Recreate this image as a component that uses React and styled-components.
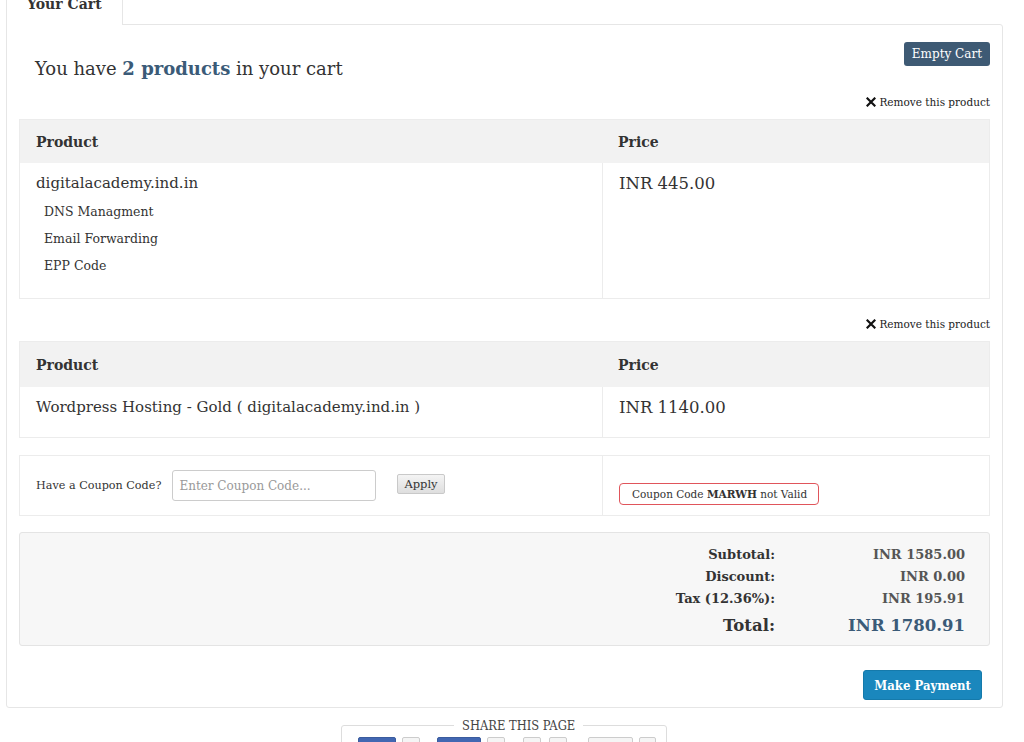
import React from 'react';
import styled, { createGlobalStyle } from 'styled-components';

const GlobalStyle = createGlobalStyle`
  html, body {
    margin: 0;
    padding: 0;
    background: #fff;
    font-family: "DejaVu Serif", "Liberation Serif", serif;
    color: #333;
    overflow: hidden;
  }
  * { box-sizing: border-box; }
`;

const Page = styled.div`
  width: 1024px;
  height: 742px;
  overflow: hidden;
  padding: 0 21px 0 6px;
`;

const Tabs = styled.div`
  display: flex;
  margin-top: -16px;
`;

const Tab = styled.div`
  width: 117px;
  height: 41px;
  border: 1px solid #e6e6e6;
  border-bottom: none;
  background: #fff;
  font-weight: bold;
  font-size: 14px;
  padding: 11px 0 0 20px;
  position: relative;
  z-index: 1;
  margin-bottom: -1px;
`;

const Panel = styled.div`
  border: 1px solid #e6e6e6;
  border-radius: 0 3px 3px 3px;
  padding: 17px 12px 7px 12px;
`;

const CartHead = styled.div`
  display: flex;
  justify-content: space-between;
  align-items: flex-start;
  padding: 0 0 0 16px;
`;

const Title = styled.h2`
  margin: 16px 0 0 0;
  font-size: 18px;
  font-weight: normal;
  color: #333;
  b { color: #3b5b78; }
`;

const DarkButton = styled.button`
  font-family: inherit;
  font-size: 12px;
  color: #fff;
  background: #3e5a74;
  border: none;
  border-radius: 3px;
  height: 24px;
  padding: 0 8px;
`;

const RemoveRow = styled.div`
  display: flex;
  justify-content: flex-end;
  align-items: center;
  gap: 3px;
  font-size: 10.5px;
  color: #222;
  margin-top: ${p => p.$top}px;
  height: 16px;
`;

const Table = styled.div`
  border: 1px solid #ececec;
  margin-top: 9px;
`;

const HeadRow = styled.div`
  display: grid;
  grid-template-columns: 582px 1fr;
  background: #f2f2f2;
  height: ${p => p.$h}px;
  align-items: center;
  font-weight: bold;
  font-size: 14px;
  color: #333;
  & > div { padding-left: 16px; }
`;

const BodyRow = styled.div`
  display: grid;
  grid-template-columns: 582px 1fr;
  & > div + div { border-left: 1px solid #ececec; }
`;

const Cell = styled.div`
  padding: ${p => p.$pad || '12px 16px'};
  min-height: ${p => p.$h || 0}px;
  font-size: ${p => p.$size || 15}px;
  color: #333;
`;

const SubList = styled.ul`
  list-style: none;
  margin: 11px 0 0 8px;
  padding: 0;
  li {
    font-size: 12.5px;
    height: 27px;
    line-height: 17px;
  }
`;

const CouponBox = styled.div`
  display: grid;
  grid-template-columns: 582px 1fr;
  border: 1px solid #ececec;
  margin-top: 17px;
  height: 61px;
  & > div + div { border-left: 1px solid #ececec; }
`;

const CouponLeft = styled.div`
  display: flex;
  align-items: center;
  padding-left: 16px;
  font-size: 11.2px;
`;

const CouponInput = styled.input`
  width: 204px;
  height: 31px;
  margin: 0 0 0 11px;
  border: 1px solid #ccc;
  border-radius: 3px;
  font-family: inherit;
  font-size: 12px;
  padding: 0 6px;
  color: #333;
  &::placeholder { color: #999; }
`;

const ApplyButton = styled.button`
  margin-left: 21px;
  font-family: inherit;
  font-size: 11.5px;
  height: 20px;
  padding: 0 6px;
  border: 1px solid #c9c9c9;
  border-radius: 2px;
  background: linear-gradient(#f4f4f4, #dedede);
  color: #333;
  margin-top: -3px;
`;

const CouponRight = styled.div`
  padding: 27px 0 0 16px;
`;

const ErrorBox = styled.div`
  display: inline-block;
  border: 1px solid #e0555b;
  border-radius: 4px;
  font-size: 10.5px;
  padding: 4px 11px 4px 12px;
  color: #333;
`;

const Totals = styled.div`
  margin-top: 16px;
  background: #f7f7f7;
  border: 1px solid #e4e4e4;
  border-radius: 3px;
  height: 114px;
  padding: 10px 24px 0 0;
  display: grid;
  grid-template-columns: 1fr 190px;
  grid-auto-rows: 22px;
  align-items: center;
  font-weight: bold;
  font-size: 13px;
`;

const TLabel = styled.div`
  text-align: right;
  color: #333;
  font-size: ${p => (p.$big ? 16.5 : 13)}px;
  margin-top: ${p => (p.$big ? 10 : 0)}px;
`;

const TValue = styled.div`
  text-align: right;
  color: ${p => (p.$big ? '#3b5b78' : '#555')};
  font-size: ${p => (p.$big ? 16.5 : 13)}px;
  margin-top: ${p => (p.$big ? 10 : 0)}px;
`;

const Footer = styled.div`
  display: flex;
  justify-content: flex-end;
  padding: 24px 8px 0 0;
`;

const PayButton = styled.button`
  font-family: "DejaVu Serif Condensed", "DejaVu Serif", serif;
  font-weight: bold;
  font-size: 13px;
  color: #fff;
  background: #1a87bd;
  border: 1px solid #157aab;
  border-radius: 3px;
  height: 30px;
  padding: 0 10px;
`;

const Share = styled.fieldset`
  width: 326px;
  min-inline-size: 0;
  margin: 10px 0 0 335px;
  border: 1px solid #ddd;
  border-radius: 3px;
  padding: 4px 16px 0;
  height: 40px;
  legend {
    font-family: "DejaVu Serif Condensed", "DejaVu Serif", serif;
    font-size: 12.8px;
    color: #444;
    padding: 0 8px;
    margin: 0 0 0 96px;
  }
`;

const ShareRow = styled.div`
  display: flex;
  align-items: flex-start;
  gap: 6px;
`;

const ShareBtn = styled.div`
  flex: none;
  width: ${p => p.$w}px;
  height: 20px;
  border-radius: 2px;
  background: ${p => (p.$blue ? '#4267b2' : '#f5f5f5')};
  border: 1px solid ${p => (p.$blue ? '#3b5c9e' : '#ccc')};
  margin-right: ${p => p.$gap || 0}px;
`;

const XIcon = () => (
  <svg width="10" height="10" viewBox="0 0 10 10">
    <path d="M1.5 1.5 L8.5 8.5 M8.5 1.5 L1.5 8.5" stroke="#111" strokeWidth="2.2" strokeLinecap="square" />
  </svg>
);

const products = [
  {
    name: 'digitalacademy.ind.in',
    price: 'INR 445.00',
    extras: ['DNS Managment', 'Email Forwarding', 'EPP Code'],
  },
  {
    name: 'Wordpress Hosting - Gold ( digitalacademy.ind.in )',
    price: 'INR 1140.00',
    extras: [],
  },
];

const App = () => (
  <Page>
    <GlobalStyle />
    <Tabs>
      <Tab>Your Cart</Tab>
    </Tabs>
    <Panel>
      <CartHead>
        <Title>
          You have <b>2 products</b> in your cart
        </Title>
        <DarkButton>Empty Cart</DarkButton>
      </CartHead>

      {products.map((p, i) => (
        <React.Fragment key={p.name}>
          <RemoveRow $top={i === 0 ? 15 : 17}>
            <XIcon />
            Remove this product
          </RemoveRow>
          <Table>
            <HeadRow $h={i === 0 ? 43 : 45}>
              <div>Product</div>
              <div>Price</div>
            </HeadRow>
            <BodyRow>
              <Cell $h={i === 0 ? 135 : 50} $pad="11px 16px">
                {p.name}
                {p.extras.length > 0 && (
                  <SubList>
                    {p.extras.map(e => (
                      <li key={e}>{e}</li>
                    ))}
                  </SubList>
                )}
              </Cell>
              <Cell $pad="11px 16px" $size={16.5}>{p.price}</Cell>
            </BodyRow>
          </Table>
        </React.Fragment>
      ))}

      <CouponBox>
        <CouponLeft>
          Have a Coupon Code?
          <CouponInput placeholder="Enter Coupon Code..." />
          <ApplyButton>Apply</ApplyButton>
        </CouponLeft>
        <CouponRight>
          <ErrorBox>
            Coupon Code <b>MARWH</b> not Valid
          </ErrorBox>
        </CouponRight>
      </CouponBox>

      <Totals>
        <TLabel>Subtotal:</TLabel>
        <TValue>INR 1585.00</TValue>
        <TLabel>Discount:</TLabel>
        <TValue>INR 0.00</TValue>
        <TLabel>Tax (12.36%):</TLabel>
        <TValue>INR 195.91</TValue>
        <TLabel $big>Total:</TLabel>
        <TValue $big>INR 1780.91</TValue>
      </Totals>

      <Footer>
        <PayButton>Make Payment</PayButton>
      </Footer>
    </Panel>

    <Share>
      <legend>SHARE THIS PAGE</legend>
      <ShareRow>
        <ShareBtn $blue $w={38} />
        <ShareBtn $w={18} $gap={11} />
        <ShareBtn $blue $w={44} />
        <ShareBtn $w={18} $gap={12} />
        <ShareBtn $w={18} $gap={2} />
        <ShareBtn $w={18} $gap={15} />
        <ShareBtn $w={45} />
        <ShareBtn $w={17} />
      </ShareRow>
    </Share>
  </Page>
);

export default App;
